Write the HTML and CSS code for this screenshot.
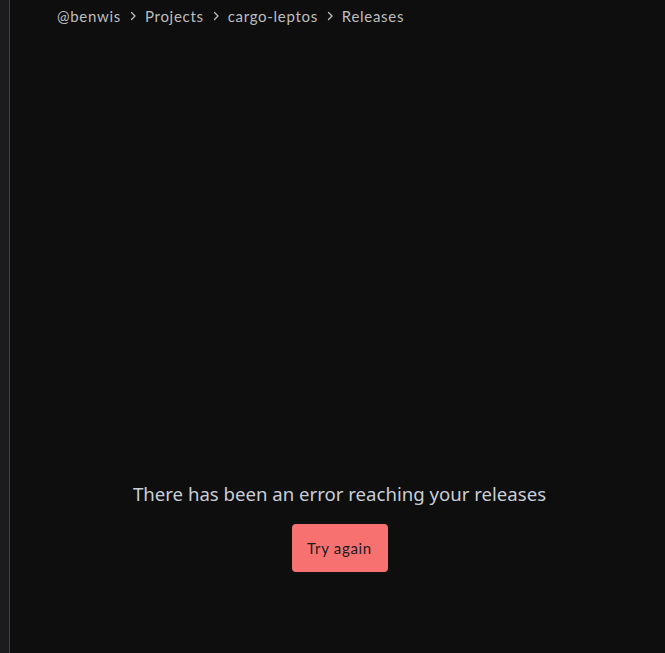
FILE: index.html
```html
<!DOCTYPE html>
<html>
<head>
<meta charset="utf-8">
<link rel="stylesheet" href="styles.css">
</head>
<body>
<div class="app">
  <aside class="sidebar"></aside>
  <main class="main">
    <nav class="crumbs">
      <span class="crumb">@benwis</span>
      <svg class="chev" viewBox="0 0 12 12"><path d="M4.5 2.5 8 6 4.5 9.5" fill="none" stroke="currentColor" stroke-width="1.3" stroke-linecap="round" stroke-linejoin="round"/></svg>
      <span class="crumb">Projects</span>
      <svg class="chev" viewBox="0 0 12 12"><path d="M4.5 2.5 8 6 4.5 9.5" fill="none" stroke="currentColor" stroke-width="1.3" stroke-linecap="round" stroke-linejoin="round"/></svg>
      <span class="crumb">cargo-leptos</span>
      <svg class="chev" viewBox="0 0 12 12"><path d="M4.5 2.5 8 6 4.5 9.5" fill="none" stroke="currentColor" stroke-width="1.3" stroke-linecap="round" stroke-linejoin="round"/></svg>
      <span class="crumb">Releases</span>
    </nav>
    <section class="error">
      <h2 class="error-title">There has been an error reaching your releases</h2>
      <button class="retry">Try again</button>
    </section>
  </main>
</div>
</body>
</html>
```
FILE: styles.css
```css
html, body {
  margin: 0;
  height: 100%;
  background: #0e0e0e;
}
.app {
  display: flex;
  height: 653px;
}
.sidebar {
  width: 9px;
  background: #1b1b1d;
  border-right: 1px solid #3f3f42;
}
.main {
  flex: 1;
  background: #0e0e0e;
  display: flex;
  flex-direction: column;
}
.crumbs {
  display: flex;
  align-items: center;
  gap: 6px;
  padding: 6px 0 0 47px;
  height: 20px;
  font-family: "Lato", sans-serif;
  font-size: 15px;
  letter-spacing: 0.7px;
  color: #bdbdbd;
}
.chev {
  width: 12px;
  height: 12px;
  color: #bdbdbd;
}
.error {
  display: flex;
  flex-direction: column;
  align-items: center;
  padding: 455px 0 0 4px;
}
.error-title {
  margin: 0;
  font-family: "Noto Sans", sans-serif;
  font-weight: 400;
  font-size: 18.6px;
  line-height: 26px;
  color: #c9ced8;
}
.retry {
  margin-top: 17px;
  width: 96px;
  height: 48px;
  border: none;
  border-radius: 4px;
  background: #f87171;
  color: #1c1c1c;
  font-family: "Lato", sans-serif;
  font-size: 15px;
  letter-spacing: 0.7px;
  padding: 0;
}
```
